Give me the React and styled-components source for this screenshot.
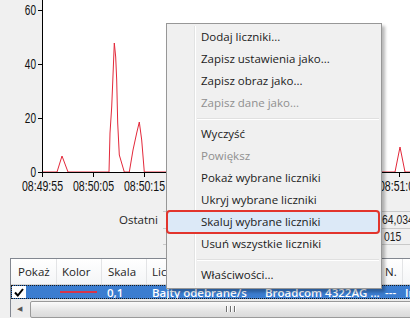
import styled, { createGlobalStyle } from "styled-components";

const GlobalStyle = createGlobalStyle`
  html, body {
    margin: 0;
    padding: 0;
    background: #f0f0f0;
  }
  body {
    font-family: "Open Sans", "Noto Sans", sans-serif;
  }
`;

const Window = styled.div`
  position: relative;
  width: 410px;
  height: 318px;
  overflow: hidden;
  background: #f0f0f0;
  color: #1e1e1e;
  display: flex;
  flex-direction: column;

  & > * {
    flex: none;
  }
`;

const ChartSvg = styled.svg`
  display: block;
  font-family: "Liberation Sans Narrow", "Liberation Sans", sans-serif;
  font-size: 14px;
  fill: #111;
`;

const Stats = styled.div`
  display: grid;
  grid-template-columns: 158px 213px 60px;
  column-gap: 5px;
  grid-auto-rows: 17px;
  font-size: 11.5px;
`;

const StatLabel = styled.div`
  text-align: right;
  line-height: 17px;
  white-space: nowrap;
`;

const StatField = styled.div`
  border-top: 1px solid #c9c9c9;
  border-bottom: ${(p) => (p.$last ? "1px solid #c9c9c9" : "none")};
  padding-left: ${(p) => (p.$last ? 3 : 1)}px;
  font-family: "Liberation Sans Narrow", "Liberation Sans", sans-serif;
  font-size: 13px;
  line-height: 16px;
  white-space: nowrap;
`;

const Narrow = styled.span`
  display: inline-block;
  transform: scaleX(0.8);
  transform-origin: left center;
`;

const Table = styled.div`
  margin: 13px 0 0 10px;
  width: 430px;
  border-left: 1px solid #828790;
  border-top: 1px solid #828790;
  background: #fff;
  font-size: 11.5px;
`;

const Cols = "46px 45px 45px 112px 121px 23px 40px";

const HeaderRow = styled.div`
  display: grid;
  grid-template-columns: ${Cols};
  height: 25px;
  background: linear-gradient(#ffffff, #f4f5f7);
  border-bottom: 1px solid #d5d5d5;
`;

const HeaderCell = styled.div`
  display: flex;
  align-items: center;
  padding-left: ${(p) => p.$pad ?? 6}px;
  border-right: 1px solid #e3e4e6;
  white-space: nowrap;
  overflow: hidden;
`;

const DataRow = styled.div`
  display: grid;
  grid-template-columns: ${Cols};
  height: 14px;
  background: #3b7dd0;
  color: #fff;
  font-weight: 600;
  outline: 1px dotted #1a1a1a;
  outline-offset: -1px;
`;

const DataCell = styled.div`
  display: flex;
  align-items: center;
  padding-left: ${(p) => p.$pad ?? 5}px;
  white-space: nowrap;
  overflow: hidden;
`;

const CheckBox = styled.div`
  width: 14px;
  height: 12px;
  background: #fff;
  display: flex;
  align-items: center;
  justify-content: center;
`;

const ColorLine = styled.div`
  width: 37px;
  height: 2px;
  background: #d8344a;
  margin-left: 2px;
`;

const ScrollBar = styled.div`
  display: flex;
  align-items: center;
  gap: 2px;
  height: 18px;
  background: #ececec;
`;

const ArrowButton = styled.div`
  width: 17px;
  height: 17px;
  display: flex;
  align-items: center;
  justify-content: center;
  color: #555;
  font-size: 7px;
`;

const Thumb = styled.div`
  width: 398px;
  height: 15px;
  margin-top: 2px;
  border: 1px solid #9a9a9a;
  border-radius: 2px;
  background: linear-gradient(#fbfbfb, #e4e4e4 60%, #dadada);
  display: flex;
  align-items: center;
  justify-content: center;
  gap: 1px;
`;

const Grip = styled.span`
  width: 1px;
  height: 6px;
  background: #6e6e6e;
  box-shadow: 1px 0 0 #fff;
  margin: 0 1px;
`;

const Menu = styled.div`
  position: absolute;
  left: 166px;
  top: 23px;
  width: 214px;
  padding: 2px 0;
  background: #f0f0f0;
  border: 1px solid #979797;
  box-shadow: 3px 3px 3px rgba(0, 0, 0, 0.28);
  font-size: 11.5px;

  &::before {
    content: "";
    position: absolute;
    left: 27px;
    top: 2px;
    bottom: 2px;
    width: 1px;
    background: #e2e3e3;
    box-shadow: 1px 0 0 #ffffff;
  }
`;

const MenuItem = styled.div`
  position: relative;
  height: 22px;
  line-height: 21px;
  padding-left: 34px;
  white-space: nowrap;
  color: ${(p) => (p.$disabled ? "#8f8f8f" : "#1b1b1b")};
  background: ${(p) => (p.$active ? "#dce9f7" : "transparent")};

  &::after {
    content: "";
    display: ${(p) => (p.$active ? "block" : "none")};
    position: absolute;
    left: -1px;
    right: 1px;
    top: -1px;
    bottom: -1px;
    border: 2.5px solid #e2342c;
    border-radius: 4px;
  }
`;

const Separator = styled.div`
  height: 0;
  margin: 4px 2px 3px 30px;
  border-top: 1px solid #e0e0e0;
  border-bottom: 1px solid #ffffff;
`;

const yTicks = [60, 40, 20, 0];
const xTicks = [0, 1, 2, 3, 4, 5, 6, 7];
const xLabels = { 0: "08:49:55", 1: "08:50:05", 2: "08:50:15", 7: "08:51:05" };

const plot = [
  [43, 172], [57, 172], [62, 156], [68, 172], [109, 172], [110, 133],
  [111.7, 107], [112.7, 83], [114.3, 43], [115.7, 57], [116.7, 80],
  [117.7, 123], [119.3, 155], [124.3, 172], [129.3, 172], [133, 150],
  [136.7, 133], [139.3, 122], [141.7, 140], [144.3, 172], [395, 172],
  [400, 147], [405, 172], [410, 172],
];

const Chart = () => (
  <ChartSvg width="410" height="211" viewBox="0 0 410 211">
    <rect x="43" y="0" width="367" height="172" fill="#fff" />
    <polyline
      points={plot.map((p) => p.join(",")).join(" ")}
      fill="none"
      stroke="#e3283a"
      strokeWidth="1"
    />
    <line x1="42.5" y1="0" x2="42.5" y2="177" stroke="#000" />
    <line x1="42" y1="172.5" x2="410" y2="172.5" stroke="#000" />
    {yTicks.map((v) => {
      const y = 172 - v * 2.7;
      const label = String(v);
      return (
        <g key={v}>
          <line x1="38" y1={y + 0.5} x2="42" y2={y + 0.5} stroke="#000" />
          <text
            x="36"
            y={y + 5}
            textAnchor="end"
            textLength={label.length * 5.6}
            lengthAdjust="spacingAndGlyphs"
          >
            {label}
          </text>
        </g>
      );
    })}
    {xTicks.map((i) => {
      const x = 42 + i * 51;
      return (
        <g key={i}>
          <line x1={x + 0.5} y1="172" x2={x + 0.5} y2="177" stroke="#000" />
          {xLabels[i] && (
            <text
              x={x + 0.5}
              y="191"
              textAnchor="middle"
              textLength="41"
              lengthAdjust="spacingAndGlyphs"
            >
              {xLabels[i]}
            </text>
          )}
        </g>
      );
    })}
  </ChartSvg>
);

const Check = () => (
  <svg width="10" height="9" viewBox="0 0 10 9">
    <path d="M1 4.5 L3.8 7.5 L9 1" fill="none" stroke="#000" strokeWidth="2" />
  </svg>
);

export default function App() {
  return (
    <Window>
      <GlobalStyle />
      <Chart />
      <Stats>
        <StatLabel>Ostatni</StatLabel>
        <StatField />
        <StatField>
          <Narrow>64,034</Narrow>
        </StatField>
        <StatLabel />
        <StatField $last />
        <StatField $last>
          <Narrow>015</Narrow>
        </StatField>
      </Stats>
      <Table>
        <HeaderRow>
          <HeaderCell $pad={7}>Pokaż</HeaderCell>
          <HeaderCell $pad={5}>Kolor</HeaderCell>
          <HeaderCell>Skala</HeaderCell>
          <HeaderCell $pad={5}>Licznik</HeaderCell>
          <HeaderCell>Wystąpienie</HeaderCell>
          <HeaderCell $pad={5}>N.</HeaderCell>
          <HeaderCell $pad={8}>Obiekt</HeaderCell>
        </HeaderRow>
        <DataRow>
          <DataCell $pad={1}>
            <CheckBox>
              <Check />
            </CheckBox>
          </DataCell>
          <DataCell $pad={1}>
            <ColorLine />
          </DataCell>
          <DataCell>0,1</DataCell>
          <DataCell>Bajty odebrane/s</DataCell>
          <DataCell $pad={6}>Broadcom 4322AG ...</DataCell>
          <DataCell>---</DataCell>
          <DataCell $pad={2}>Interfejs sieciowy</DataCell>
        </DataRow>
        <ScrollBar>
          <ArrowButton>◀</ArrowButton>
          <Thumb>
            <Grip />
            <Grip />
            <Grip />
          </Thumb>
        </ScrollBar>
      </Table>
      <Menu>
        <MenuItem>Dodaj liczniki...</MenuItem>
        <MenuItem>Zapisz ustawienia jako...</MenuItem>
        <MenuItem>Zapisz obraz jako...</MenuItem>
        <MenuItem $disabled>Zapisz dane jako...</MenuItem>
        <Separator />
        <MenuItem>Wyczyść</MenuItem>
        <MenuItem $disabled>Powiększ</MenuItem>
        <MenuItem>Pokaż wybrane liczniki</MenuItem>
        <MenuItem>Ukryj wybrane liczniki</MenuItem>
        <MenuItem $active>Skaluj wybrane liczniki</MenuItem>
        <MenuItem>Usuń wszystkie liczniki</MenuItem>
        <Separator />
        <MenuItem>Właściwości...</MenuItem>
      </Menu>
    </Window>
  );
}
